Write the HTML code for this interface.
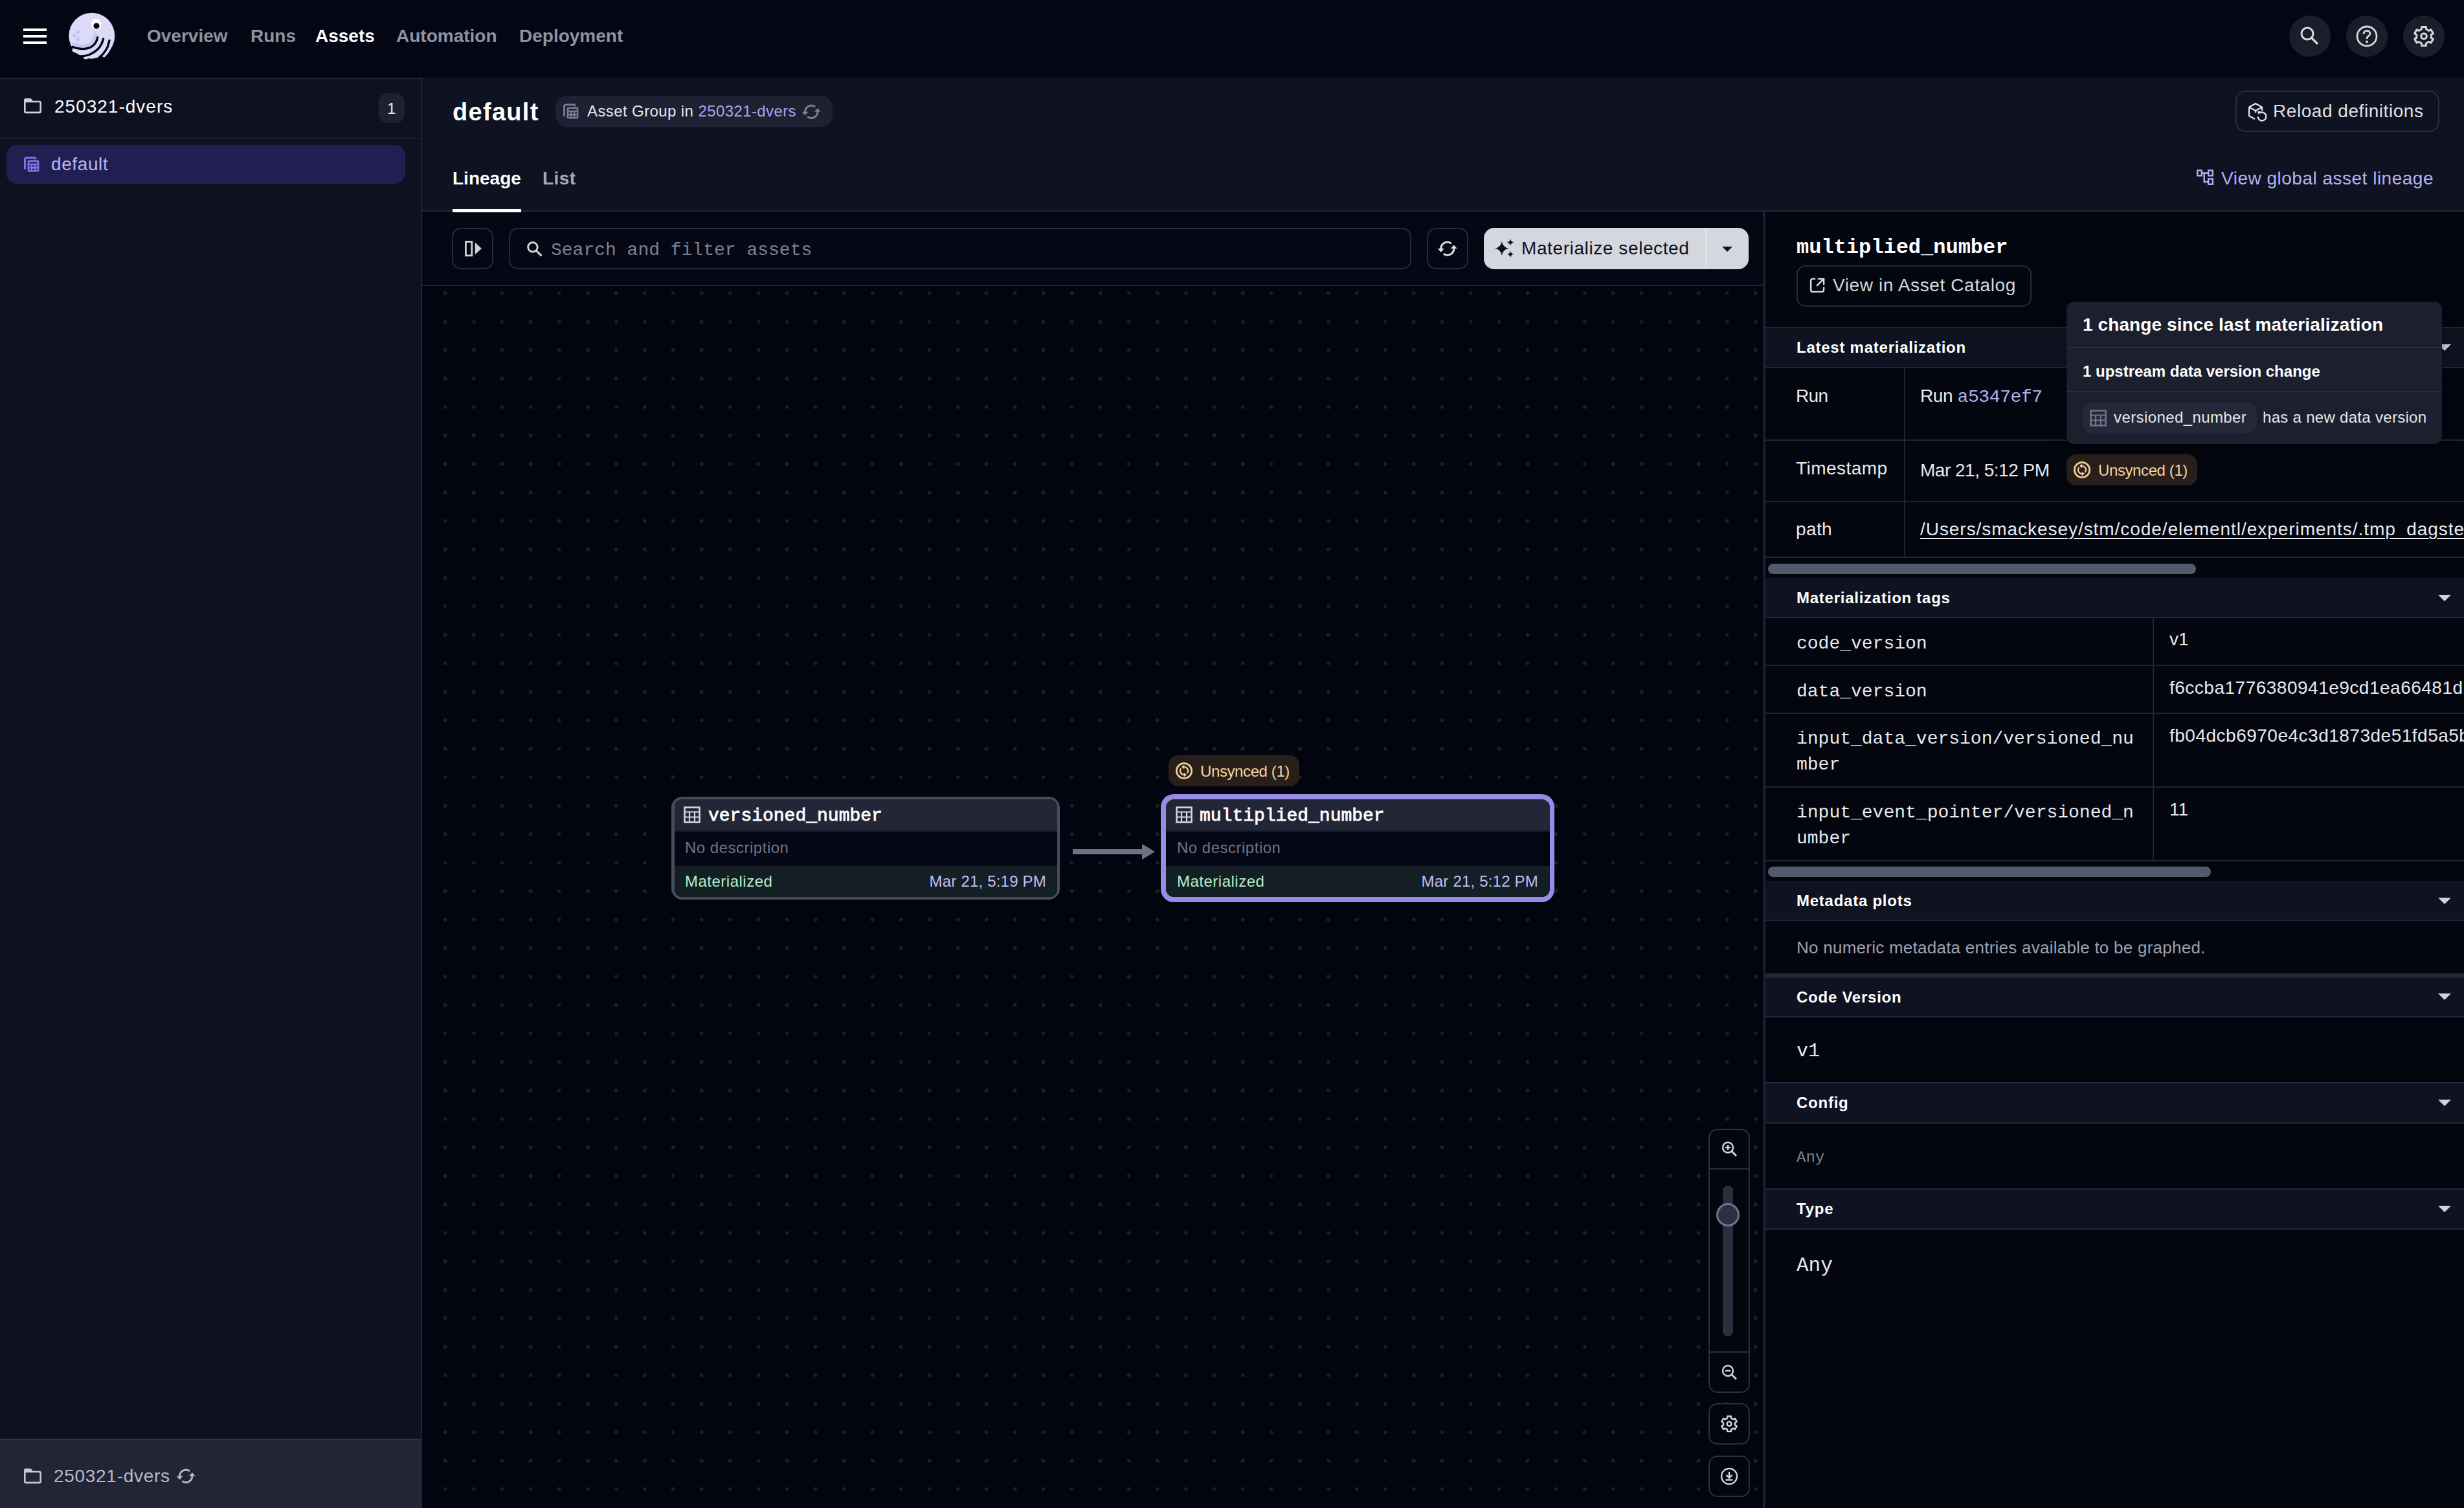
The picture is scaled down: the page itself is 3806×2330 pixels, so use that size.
<!DOCTYPE html>
<html><head><meta charset="utf-8">
<style>
*{box-sizing:border-box;margin:0;padding:0}
html,body{width:3806px;height:2330px;overflow:hidden;background:#03060f;font-family:"Liberation Sans",sans-serif;color:#e6e7ec;position:relative}
.a{position:absolute}
.t{position:absolute;white-space:nowrap;line-height:1}
svg{position:absolute;overflow:visible}
</style></head><body>
<div class="a" style="left:0px;top:0px;width:3806px;height:120px;background:#040614;"></div>
<div class="a" style="left:36px;top:44px;width:36px;height:4px;background:#ffffff;"></div>
<div class="a" style="left:36px;top:54px;width:36px;height:4px;background:#ffffff;"></div>
<div class="a" style="left:36px;top:64px;width:36px;height:4px;background:#ffffff;"></div>
<svg style="left:100px;top:14px;" width="84" height="84" viewBox="0 0 84 84">
<circle cx="41.8" cy="41.3" r="35.5" fill="#dcdaf8"/>
<path d="M14.5 63.5 C22 68 36 68.5 45 63.5 C50 60.5 53 56 55 50" fill="none" stroke="#dcdaf8" stroke-width="6" stroke-linecap="round"/>
<path d="M32 74.5 C42 73 52 68 58 60 C61 56 63 52 64 48" fill="none" stroke="#dcdaf8" stroke-width="6" stroke-linecap="round"/>
<path d="M60.5 71.5 C65 67 69 61 71 54" fill="none" stroke="#dcdaf8" stroke-width="5.5" stroke-linecap="round"/>
<path d="M14 55 C22 59 32 59 40 54 C45 50 47 44 48 40" fill="none" stroke="#c8c4f3" stroke-width="6" stroke-linecap="round"/>
<path d="M12 58.5 C20 62 32 63 40 59 C46 56 49.5 50 50.7 44" fill="none" stroke="#040614" stroke-width="3.4" stroke-linecap="round"/>
<path d="M18 72 C24 73.5 31 73 38 70.5 C44 68 48 65 51 62 C55 58 58 52 59.6 46.2" fill="none" stroke="#040614" stroke-width="3.4" stroke-linecap="round"/><path d="M14 66.5 Q22 74 31 77.5 L14 80 Z" fill="#040614"/><path d="M31 79 Q44 78 58 72 L58 82 L31 82 Z" fill="#040614"/>
<path d="M54 74 C58 71.5 62.5 65.5 66 59 C67.5 54 68.3 51.5 69 48.7" fill="none" stroke="#040614" stroke-width="3.4" stroke-linecap="round"/>
<circle cx="48.5" cy="23.6" r="8" fill="#ffffff"/><circle cx="49" cy="26" r="4.6" fill="#0a0a1a"/>
<circle cx="20.3" cy="35.4" r="2.6" fill="#c4c0f0"/><circle cx="14.8" cy="41" r="2.6" fill="#c4c0f0"/><circle cx="20.3" cy="46.5" r="2.6" fill="#c4c0f0"/>
</svg>
<div class="t" style="left:227px;top:42.2px;font-size:28px;font-family:'Liberation Sans',sans-serif;color:#8e93a3;font-weight:bold;">Overview</div>
<div class="t" style="left:387px;top:42.2px;font-size:28px;font-family:'Liberation Sans',sans-serif;color:#8e93a3;font-weight:bold;">Runs</div>
<div class="t" style="left:487px;top:42.2px;font-size:28px;font-family:'Liberation Sans',sans-serif;color:#ffffff;font-weight:bold;">Assets</div>
<div class="t" style="left:612px;top:42.2px;font-size:28px;font-family:'Liberation Sans',sans-serif;color:#8e93a3;font-weight:bold;">Automation</div>
<div class="t" style="left:802px;top:42.2px;font-size:28px;font-family:'Liberation Sans',sans-serif;color:#8e93a3;font-weight:bold;">Deployment</div>
<div class="a" style="left:3536px;top:24px;width:64px;height:64px;background:#1b1d2a;border-radius:50%;"></div>
<div class="a" style="left:3624px;top:24px;width:64px;height:64px;background:#1b1d2a;border-radius:50%;"></div>
<div class="a" style="left:3712px;top:24px;width:64px;height:64px;background:#1b1d2a;border-radius:50%;"></div>
<svg style="left:3552px;top:40px;" width="32" height="32" viewBox="0 0 32 32"><circle cx="12" cy="12" r="9" fill="none" stroke="#d5d7de" stroke-width="3"/><path d="M19 19 L28 28" stroke="#d5d7de" stroke-width="3.2"/></svg>
<svg style="left:3640px;top:40px;" width="32" height="32" viewBox="0 0 32 32"><circle cx="16" cy="16" r="15" fill="none" stroke="#d5d7de" stroke-width="2.8"/><path d="M11 12.5 C11 9 13.5 7.5 16 7.5 C18.8 7.5 21 9.3 21 12 C21 15 17.5 15.5 16.2 18 L16.2 20" fill="none" stroke="#d5d7de" stroke-width="2.8"/><circle cx="16" cy="24.5" r="1.9" fill="#d5d7de"/></svg>
<svg style="left:3728px;top:40px;" width="32" height="32" viewBox="0 0 32 32"><path d="M12.45 5.06 L12.57 1.40 L19.43 1.40 L19.55 5.06 L23.70 7.45 L26.93 5.73 L30.36 11.66 L27.25 13.61 L27.25 18.39 L30.36 20.34 L26.93 26.27 L23.70 24.55 L19.55 26.94 L19.43 30.60 L12.57 30.60 L12.45 26.94 L8.30 24.55 L5.07 26.27 L1.64 20.34 L4.75 18.39 L4.75 13.61 L1.64 11.66 L5.07 5.73 L8.30 7.45 Z" fill="none" stroke="#d5d7de" stroke-width="3" stroke-linejoin="round"/><circle cx="16" cy="16" r="4.3" fill="none" stroke="#d5d7de" stroke-width="3"/></svg>
<div class="a" style="left:0px;top:120px;width:650px;height:2210px;background:#0e1120;"></div>
<div class="a" style="left:0px;top:120px;width:652px;height:2px;background:#22263a;"></div>
<div class="a" style="left:650px;top:120px;width:2px;height:2210px;background:#1f2333;"></div>
<div class="a" style="left:0px;top:213px;width:650px;height:2px;background:#1d2030;"></div>
<svg style="left:37px;top:152px;" width="27" height="23" viewBox="0 0 27 23"><rect x="1.3" y="5" width="24.4" height="16.9" rx="2" fill="none" stroke="#d0d2da" stroke-width="2.6"/><path d="M0 2.5 Q0 0 2.5 0 L10.5 0 L13.5 3.8 L13.5 5 L0 5 Z" fill="#d0d2da"/></svg>
<div class="t" style="left:84px;top:151.2px;font-size:28px;font-family:'Liberation Sans',sans-serif;color:#ffffff;letter-spacing:1px;">250321-dvers</div>
<div class="a" style="left:585px;top:144px;width:40px;height:46px;background:#1e2131;border-radius:14px;"></div>
<div class="t" style="left:598px;top:155.6px;font-size:24px;font-family:'Liberation Sans',sans-serif;color:#e6e7ec;">1</div>
<div class="a" style="left:10px;top:224px;width:616px;height:60px;background:#211f52;border-radius:16px;"></div>
<svg style="left:37px;top:242px;" width="25" height="25" viewBox="0 0 25 25"><path d="M1.5 18.6 L1.5 4.7 Q1.5 1.7 4.5 1.7 L16.4 1.7 Q17.9 1.7 17.9 3.5" fill="none" stroke="#7c76e2" stroke-width="2.9" stroke-linecap="round"/><rect x="5.1" y="4.9" width="18.8" height="19" rx="3.2" fill="#7c76e2" stroke="#211f52" stroke-width="0.8"/><g fill="#211f52"><rect x="8.2" y="8.3" width="12.6" height="2.3"/><rect x="8.2" y="13.2" width="2.6" height="2.4"/><rect x="13.2" y="13.2" width="2.8" height="2.4"/><rect x="18.4" y="13.2" width="2.6" height="2.4"/><rect x="8.2" y="18.6" width="2.6" height="2.4"/><rect x="13.2" y="18.6" width="2.8" height="2.4"/><rect x="18.4" y="18.6" width="2.6" height="2.4"/></g></svg>
<div class="t" style="left:79px;top:240.2px;font-size:28px;font-family:'Liberation Sans',sans-serif;color:#b9b5f3;letter-spacing:0.6px;">default</div>
<div class="a" style="left:0px;top:2223px;width:650px;height:107px;background:#222536;"></div>
<div class="a" style="left:0px;top:2223px;width:650px;height:2px;background:#30344a;"></div>
<svg style="left:37px;top:2269px;" width="27" height="23" viewBox="0 0 27 23"><rect x="1.3" y="5" width="24.4" height="16.9" rx="2" fill="none" stroke="#c6c8d0" stroke-width="2.6"/><path d="M0 2.5 Q0 0 2.5 0 L10.5 0 L13.5 3.8 L13.5 5 L0 5 Z" fill="#c6c8d0"/></svg>
<div class="t" style="left:83px;top:2267.2px;font-size:28px;font-family:'Liberation Sans',sans-serif;color:#b8bac4;letter-spacing:0.7px;">250321-dvers</div>
<svg style="left:273px;top:2270px;" width="29" height="21" viewBox="0 0 29 21"><g transform="scale(0.9666666666666667)"><path d="M19.7 2.44 A10 10 0 0 0 4.7 11.5" fill="none" stroke="#b8bac4" stroke-width="3" stroke-linecap="round"/><path d="M-0.3 11.1 L9.7 11.1 L4.7 16.8 Z" fill="#b8bac4"/><path d="M9.7 19.76 A10 10 0 0 0 24.7 10.7" fill="none" stroke="#b8bac4" stroke-width="3" stroke-linecap="round"/><path d="M19.7 11.1 L29.7 11.1 L24.7 5.4 Z" fill="#b8bac4"/></g></svg>
<div class="a" style="left:652px;top:120px;width:3154px;height:207px;background:#0f1220;"></div>
<div class="a" style="left:652px;top:325px;width:3154px;height:2px;background:#22263a;"></div>
<div class="t" style="left:699px;top:153.7px;font-size:38px;font-family:'Liberation Sans',sans-serif;color:#ffffff;font-weight:bold;letter-spacing:1.3px;">default</div>
<div class="a" style="left:858px;top:148px;width:428px;height:48px;background:#1e2131;border-radius:18px;"></div>
<svg style="left:870px;top:160px;" width="25" height="25" viewBox="0 0 25 25"><path d="M1.5 18.6 L1.5 4.7 Q1.5 1.7 4.5 1.7 L16.4 1.7 Q17.9 1.7 17.9 3.5" fill="none" stroke="#737b90" stroke-width="2.9" stroke-linecap="round"/><rect x="5.1" y="4.9" width="18.8" height="19" rx="3.2" fill="#737b90" stroke="#1e2131" stroke-width="0.8"/><g fill="#1e2131"><rect x="8.2" y="8.3" width="12.6" height="2.3"/><rect x="8.2" y="13.2" width="2.6" height="2.4"/><rect x="13.2" y="13.2" width="2.8" height="2.4"/><rect x="18.4" y="13.2" width="2.6" height="2.4"/><rect x="8.2" y="18.6" width="2.6" height="2.4"/><rect x="13.2" y="18.6" width="2.8" height="2.4"/><rect x="18.4" y="18.6" width="2.6" height="2.4"/></g></svg>
<div class="t" style="left:907px;top:159.6px;font-size:24px;font-family:'Liberation Sans',sans-serif;color:#e6e7ec;letter-spacing:0.4px;">Asset Group in <span style="color:#a9a5f0">250321-dvers</span></div>
<svg style="left:1239px;top:162px;" width="29" height="21" viewBox="0 0 29 21"><g transform="scale(0.9666666666666667)"><path d="M19.7 2.44 A10 10 0 0 0 4.7 11.5" fill="none" stroke="#7d8293" stroke-width="3" stroke-linecap="round"/><path d="M-0.3 11.1 L9.7 11.1 L4.7 16.8 Z" fill="#7d8293"/><path d="M9.7 19.76 A10 10 0 0 0 24.7 10.7" fill="none" stroke="#7d8293" stroke-width="3" stroke-linecap="round"/><path d="M19.7 11.1 L29.7 11.1 L24.7 5.4 Z" fill="#7d8293"/></g></svg>
<div class="a" style="left:3453px;top:140px;width:315px;height:64px;border:2px solid #2a2e3e;border-radius:16px;"></div>
<svg style="left:3472px;top:158px;" width="28" height="30" viewBox="0 0 28 30"><path d="M2 7.5 L12 2 L22 7.5 L22 13" fill="none" stroke="#e0e1e6" stroke-width="2.4" stroke-linejoin="round"/><path d="M2 7.5 L2 21 L11 26" fill="none" stroke="#e0e1e6" stroke-width="2.4" stroke-linejoin="round"/><path d="M2 7.5 L12 13 L22 7.5" fill="none" stroke="#e0e1e6" stroke-width="2.4" stroke-linejoin="round"/><path d="M12 13 L12 16" stroke="#e0e1e6" stroke-width="2.4"/><path d="M15.5 22 A6.5 6.5 0 1 0 18.5 16.5" fill="none" stroke="#e0e1e6" stroke-width="2.4"/><path d="M14.5 14 L20 14 L17 19 Z" fill="#e0e1e6"/></svg>
<div class="t" style="left:3511px;top:158.2px;font-size:28px;font-family:'Liberation Sans',sans-serif;color:#e0e1e6;letter-spacing:0.55px;">Reload definitions</div>
<div class="t" style="left:699px;top:262.2px;font-size:28px;font-family:'Liberation Sans',sans-serif;color:#ffffff;font-weight:bold;">Lineage</div>
<div class="t" style="left:838px;top:262.2px;font-size:28px;font-family:'Liberation Sans',sans-serif;color:#a8abb8;font-weight:bold;letter-spacing:0.4px;">List</div>
<svg style="left:3393px;top:262px;" width="27" height="25" viewBox="0 0 27 25"><g fill="none" stroke="#b4b0f0" stroke-width="2.4"><rect x="1.2" y="1.2" width="6.6" height="8.2"/><rect x="18.2" y="1.2" width="6.6" height="8.2"/><rect x="18.2" y="14.4" width="6.6" height="8.3"/><path d="M8 5.5 L18 5.5 M11.7 5.5 L11.7 19 L18 19"/></g></svg>
<div class="t" style="left:3431px;top:262.2px;font-size:28px;font-family:'Liberation Sans',sans-serif;color:#b4b0f0;letter-spacing:0.5px;">View global asset lineage</div>
<div class="a" style="left:652px;top:327px;width:2072px;height:114px;background:#050814;"></div>
<div class="a" style="left:652px;top:440px;width:2072px;height:3px;background:#22273a;"></div>
<div class="a" style="left:699px;top:323px;width:106px;height:5px;background:#ffffff;"></div>
<div class="a" style="left:698px;top:352px;width:64px;height:64px;border:2px solid #262a3a;border-radius:14px;"></div>
<svg style="left:718px;top:372px;" width="27" height="26" viewBox="0 0 27 26"><rect x="1.4" y="1.4" width="9.4" height="21.4" fill="none" stroke="#d0d2da" stroke-width="2.8"/><path d="M15.8 2.8 L26 12 L15.8 21.3 Z" fill="#d0d2da"/></svg>
<div class="a" style="left:786px;top:352px;width:1394px;height:64px;border:2px solid #262a3a;border-radius:14px;"></div>
<svg style="left:814px;top:373px;" width="25" height="25" viewBox="0 0 25 25"><circle cx="8.9" cy="8.8" r="7.3" fill="none" stroke="#d5d7de" stroke-width="2.8"/><path d="M14.3 14.2 L22.5 22.4" stroke="#d5d7de" stroke-width="3"/></svg>
<div class="t" style="left:851px;top:372.7px;font-size:28px;font-family:'Liberation Mono',monospace;color:#7d8293;">Search and filter assets</div>
<div class="a" style="left:2204px;top:352px;width:64px;height:64px;border:2px solid #262a3a;border-radius:14px;"></div>
<svg style="left:2221px;top:373px;" width="30" height="22" viewBox="0 0 30 22"><g transform="scale(1.0)"><path d="M19.7 2.44 A10 10 0 0 0 4.7 11.5" fill="none" stroke="#dfe0e6" stroke-width="3" stroke-linecap="round"/><path d="M-0.3 11.1 L9.7 11.1 L4.7 16.8 Z" fill="#dfe0e6"/><path d="M9.7 19.76 A10 10 0 0 0 24.7 10.7" fill="none" stroke="#dfe0e6" stroke-width="3" stroke-linecap="round"/><path d="M19.7 11.1 L29.7 11.1 L24.7 5.4 Z" fill="#dfe0e6"/></g></svg>
<div class="a" style="left:2292px;top:352px;width:409px;height:64px;background:#d5d7de;border-radius:16px;"></div>
<div class="a" style="left:2634px;top:352px;width:2px;height:64px;background:#e2e3e8;"></div>
<svg style="left:2309px;top:370px;" width="30" height="30" viewBox="0 0 30 30"><path d="M10.80 3.00 Q12.31 12.29 21.60 13.80 Q12.31 15.31 10.80 24.60 Q9.29 15.31 0.00 13.80 Q9.29 12.29 10.80 3.00 Z" fill="#0e1120"/><path d="M24.05 -1.00 Q24.81 3.64 29.45 4.40 Q24.81 5.16 24.05 9.80 Q23.29 5.16 18.65 4.40 Q23.29 3.64 24.05 -1.00 Z" fill="#0e1120"/><path d="M24.05 17.45 Q24.81 22.09 29.45 22.85 Q24.81 23.61 24.05 28.25 Q23.29 23.61 18.65 22.85 Q23.29 22.09 24.05 17.45 Z" fill="#0e1120"/></svg>
<div class="t" style="left:2350px;top:370.2px;font-size:28px;font-family:'Liberation Sans',sans-serif;color:#0e1120;letter-spacing:0.6px;">Materialize selected</div>
<svg style="left:2660px;top:381px;" width="18" height="10" viewBox="0 0 18 10"><path d="M0 0 L16 0 L8 8 Z" fill="#0e1120"/></svg>
<div class="a" style="left:652px;top:442px;width:2072px;height:1888px;background:#02050f;background-image:radial-gradient(circle at 22px 22px,#1b1d2c 0,#1b1d2c 2.6px,transparent 3.2px);background-size:44px 44px;background-position:13.7px -11.1px;"></div>
<div class="a" style="left:1037px;top:1231px;width:600px;height:159px;background:#464b5e;border-radius:17px;"></div>
<div class="a" style="left:1042px;top:1235px;width:591px;height:151px;background:#050814;border-radius:12px;overflow:hidden;"></div>
<div class="a" style="left:1042px;top:1235px;width:591px;height:50px;background:#232637;border-radius:12px 12px 0 0;"></div>
<div class="a" style="left:1042px;top:1338px;width:591px;height:48px;background:#131f24;border-radius:0 0 13px 13px;"></div>
<div class="a" style="left:1042px;top:1283px;width:591px;height:2px;background:#181b29;"></div>
<svg style="left:1056px;top:1246px;" width="26" height="26" viewBox="0 0 26 26"><rect x="1.5" y="1.5" width="23" height="23" fill="none" stroke="#d5d7de" stroke-width="2.6"/><path d="M1.5 8.5 L24.5 8.5 M1.5 16.5 L24.5 16.5 M9 8.5 L9 24.5 M17 8.5 L17 24.5" stroke="#d5d7de" stroke-width="2.2"/></svg>
<div class="t" style="left:1094px;top:1247.2px;font-size:28px;font-family:'Liberation Mono',monospace;color:#ffffff;-webkit-text-stroke:0.8px #ffffff;">versioned_number</div>
<div class="t" style="left:1058px;top:1297.6px;font-size:24px;font-family:'Liberation Sans',sans-serif;color:#6f7486;letter-spacing:0.5px;">No description</div>
<div class="t" style="left:1058px;top:1349.6px;font-size:24px;font-family:'Liberation Sans',sans-serif;color:#b5edc6;letter-spacing:0.5px;">Materialized</div>
<div class="t" style="right:2190px;top:1349.6px;font-size:24px;font-family:'Liberation Sans',sans-serif;color:#c2bef5;letter-spacing:0.2px;">Mar 21, 5:19 PM</div>
<div class="a" style="left:1793px;top:1227px;width:608px;height:167px;background:#978ce4;border-radius:20px;"></div>
<div class="a" style="left:1801px;top:1235px;width:593px;height:151px;background:#050814;border-radius:13px;"></div>
<div class="a" style="left:1801px;top:1235px;width:593px;height:50px;background:#232637;border-radius:13px 13px 0 0;"></div>
<div class="a" style="left:1801px;top:1338px;width:593px;height:48px;background:#131f24;border-radius:0 0 13px 13px;"></div>
<div class="a" style="left:1801px;top:1283px;width:593px;height:2px;background:#181b29;"></div>
<svg style="left:1816px;top:1246px;" width="26" height="26" viewBox="0 0 26 26"><rect x="1.5" y="1.5" width="23" height="23" fill="none" stroke="#d5d7de" stroke-width="2.6"/><path d="M1.5 8.5 L24.5 8.5 M1.5 16.5 L24.5 16.5 M9 8.5 L9 24.5 M17 8.5 L17 24.5" stroke="#d5d7de" stroke-width="2.2"/></svg>
<div class="t" style="left:1853px;top:1247.2px;font-size:28px;font-family:'Liberation Mono',monospace;color:#ffffff;-webkit-text-stroke:0.8px #ffffff;">multiplied_number</div>
<div class="t" style="left:1818px;top:1297.6px;font-size:24px;font-family:'Liberation Sans',sans-serif;color:#6f7486;letter-spacing:0.5px;">No description</div>
<div class="t" style="left:1818px;top:1349.6px;font-size:24px;font-family:'Liberation Sans',sans-serif;color:#b5edc6;letter-spacing:0.5px;">Materialized</div>
<div class="t" style="right:1430px;top:1349.6px;font-size:24px;font-family:'Liberation Sans',sans-serif;color:#c2bef5;letter-spacing:0.2px;">Mar 21, 5:12 PM</div>
<div class="a" style="left:1657px;top:1312px;width:110px;height:8px;background:#6b7385;"></div>
<svg style="left:1764px;top:1304px;" width="20" height="24" viewBox="0 0 20 24"><path d="M0 0 L20 12 L0 24 Z" fill="#6b7385"/></svg>
<div class="a" style="left:1805px;top:1167px;width:202px;height:48px;background:#291f1a;border-radius:15px;"></div>
<svg style="left:1815px;top:1177px;" width="28" height="28" viewBox="0 0 28 28"><circle cx="14" cy="14" r="11.7" fill="none" stroke="#f0cf98" stroke-width="2.7"/><g transform="translate(14 14) rotate(90) scale(0.6) translate(-14.7 -11.1)"><path d="M19.7 2.44 A10 10 0 0 0 4.7 11.5" fill="none" stroke="#f0cf98" stroke-width="3.6" stroke-linecap="round"/><path d="M-1.3 10.6 L10.7 10.6 L4.7 17.8 Z" fill="#f0cf98"/><path d="M9.7 19.76 A10 10 0 0 0 24.7 10.7" fill="none" stroke="#f0cf98" stroke-width="3.6" stroke-linecap="round"/><path d="M18.7 11.6 L30.7 11.6 L24.7 4.4 Z" fill="#f0cf98"/></g></svg>
<div class="t" style="left:1854px;top:1179.6px;font-size:24px;font-family:'Liberation Sans',sans-serif;color:#f2d3a0;letter-spacing:-0.4px;">Unsynced (1)</div>
<div class="a" style="left:2639px;top:1744px;width:64px;height:408px;background:#03060f;border:2px solid #2a2e3e;border-radius:14px;"></div>
<div class="a" style="left:2641px;top:1805px;width:60px;height:2px;background:#2a2e3e;"></div>
<div class="a" style="left:2641px;top:2088px;width:60px;height:2px;background:#2a2e3e;"></div>
<svg style="left:2659px;top:1763px;" width="24" height="24" viewBox="0 0 24 24"><circle cx="10" cy="10" r="8" fill="none" stroke="#d5d7de" stroke-width="2.4"/><path d="M16 16 L23 23" stroke="#d5d7de" stroke-width="2.8"/><path d="M6 10 L14 10" stroke="#d5d7de" stroke-width="2.4"/><path d="M10 6 L10 14" stroke="#d5d7de" stroke-width="2.4"/></svg>
<svg style="left:2659px;top:2108px;" width="24" height="24" viewBox="0 0 24 24"><circle cx="10" cy="10" r="8" fill="none" stroke="#d5d7de" stroke-width="2.4"/><path d="M16 16 L23 23" stroke="#d5d7de" stroke-width="2.8"/><path d="M6 10 L14 10" stroke="#d5d7de" stroke-width="2.4"/></svg>
<div class="a" style="left:2661px;top:1832px;width:16px;height:233px;background:#2a2e3e;border-radius:8px;"></div>
<div class="a" style="left:2651px;top:1859px;width:36px;height:36px;background:#2c3040;border:3px solid #6f7689;border-radius:50%;"></div>
<div class="a" style="left:2639px;top:2168px;width:64px;height:64px;background:#03060f;border:2px solid #2a2e3e;border-radius:14px;"></div>
<svg style="left:2658px;top:2187px;" width="26" height="26" viewBox="0 0 26 26"><path d="M10.16 4.25 L10.21 1.12 L15.79 1.12 L15.84 4.25 L19.16 6.16 L21.89 4.65 L24.68 9.47 L22.00 11.09 L22.00 14.91 L24.68 16.53 L21.89 21.35 L19.16 19.84 L15.84 21.75 L15.79 24.88 L10.21 24.88 L10.16 21.75 L6.84 19.84 L4.11 21.35 L1.32 16.53 L4.00 14.91 L4.00 11.09 L1.32 9.47 L4.11 4.65 L6.84 6.16 Z" fill="none" stroke="#d5d7de" stroke-width="2.4" stroke-linejoin="round"/><circle cx="13" cy="13" r="3.4" fill="none" stroke="#d5d7de" stroke-width="2.4"/></svg>
<div class="a" style="left:2639px;top:2249px;width:64px;height:64px;background:#03060f;border:2px solid #2a2e3e;border-radius:14px;"></div>
<svg style="left:2657px;top:2267px;" width="28" height="28" viewBox="0 0 28 28"><circle cx="14" cy="14" r="12" fill="none" stroke="#d5d7de" stroke-width="2.4"/><path d="M14 7 L14 15" stroke="#d5d7de" stroke-width="2.4"/><path d="M9.5 12 L14 16.5 L18.5 12" fill="none" stroke="#d5d7de" stroke-width="2.4"/><path d="M8.5 19.5 L19.5 19.5" stroke="#d5d7de" stroke-width="2.4"/></svg>
<div class="a" style="left:2727px;top:327px;width:1079px;height:2003px;background:#03060f;"></div>
<div class="a" style="left:2723px;top:327px;width:4px;height:2003px;background:#1b1e2c;"></div>
<div class="t" style="left:2775px;top:366.7px;font-size:32px;font-family:'Liberation Mono',monospace;color:#ffffff;font-weight:bold;">multiplied_number</div>
<div class="a" style="left:2775px;top:410px;width:363px;height:64px;border:2px solid #262a3a;border-radius:14px;"></div>
<svg style="left:2795px;top:430px;" width="24" height="24" viewBox="0 0 24 24"><path d="M9.1 0.9 L5 0.9 Q2.1 0.9 2.1 3.8 L2.1 18 Q2.1 20.9 5 20.9 L19.2 20.9 Q22.1 20.9 22.1 18 L22.1 13.6" fill="none" stroke="#dfe0e6" stroke-width="2.4"/><path d="M13.9 0.9 L22.1 0.9 L22.1 9.1 M11.8 11.2 L21.6 1.3" fill="none" stroke="#dfe0e6" stroke-width="2.4" stroke-linecap="round"/></svg>
<div class="t" style="left:2831px;top:427.2px;font-size:28px;font-family:'Liberation Sans',sans-serif;color:#d5d7de;letter-spacing:0.6px;">View in Asset Catalog</div>
<div class="a" style="left:2727px;top:505px;width:1079px;height:63px;background:#0f1220;"></div>
<div class="a" style="left:2727px;top:505px;width:1079px;height:2px;background:#22263a;"></div>
<div class="a" style="left:2727px;top:567px;width:1079px;height:2px;background:#22263a;"></div>
<div class="t" style="left:2775px;top:525.1px;font-size:24px;font-family:'Liberation Sans',sans-serif;color:#ffffff;font-weight:bold;letter-spacing:0.75px;">Latest materialization</div>
<svg style="left:3766px;top:531.5px;" width="20" height="10" viewBox="0 0 20 10"><path d="M0 0 L20 0 L10 10 Z" fill="#d0d2da"/></svg>
<div class="a" style="left:2727px;top:679px;width:1079px;height:2px;background:#1f2333;"></div>
<div class="a" style="left:2727px;top:774px;width:1079px;height:2px;background:#1f2333;"></div>
<div class="a" style="left:2727px;top:860px;width:1079px;height:2px;background:#1f2333;"></div>
<div class="a" style="left:2941px;top:568px;width:2px;height:293px;background:#1f2333;"></div>
<div class="t" style="left:2774px;top:598.2px;font-size:28px;font-family:'Liberation Sans',sans-serif;color:#e8e9ee;letter-spacing:-0.7px;">Run</div>
<div class="t" style="left:2966px;top:598.2px;font-size:28px;font-family:'Liberation Sans',sans-serif;color:#e8e9ee;letter-spacing:-0.4px;">Run&nbsp;<span style="font-family:'Liberation Mono',monospace;color:#b3aff2">a5347ef7</span></div>
<div class="t" style="left:2774px;top:710.2px;font-size:28px;font-family:'Liberation Sans',sans-serif;color:#e8e9ee;letter-spacing:0.45px;">Timestamp</div>
<div class="t" style="left:2966px;top:713.2px;font-size:28px;font-family:'Liberation Sans',sans-serif;color:#e8e9ee;letter-spacing:-0.5px;">Mar 21, 5:12 PM</div>
<div class="a" style="left:3192px;top:702px;width:202px;height:48px;background:#291f1a;border-radius:15px;"></div>
<svg style="left:3202px;top:712px;" width="28" height="28" viewBox="0 0 28 28"><circle cx="14" cy="14" r="11.7" fill="none" stroke="#f0cf98" stroke-width="2.7"/><g transform="translate(14 14) rotate(90) scale(0.6) translate(-14.7 -11.1)"><path d="M19.7 2.44 A10 10 0 0 0 4.7 11.5" fill="none" stroke="#f0cf98" stroke-width="3.6" stroke-linecap="round"/><path d="M-1.3 10.6 L10.7 10.6 L4.7 17.8 Z" fill="#f0cf98"/><path d="M9.7 19.76 A10 10 0 0 0 24.7 10.7" fill="none" stroke="#f0cf98" stroke-width="3.6" stroke-linecap="round"/><path d="M18.7 11.6 L30.7 11.6 L24.7 4.4 Z" fill="#f0cf98"/></g></svg>
<div class="t" style="left:3241px;top:714.6px;font-size:24px;font-family:'Liberation Sans',sans-serif;color:#f2d3a0;letter-spacing:-0.4px;">Unsynced (1)</div>
<div class="t" style="left:2774px;top:804.2px;font-size:28px;font-family:'Liberation Sans',sans-serif;color:#e8e9ee;letter-spacing:0.4px;">path</div>
<div class="t" style="left:2966px;top:804.2px;font-size:28px;font-family:'Liberation Sans',sans-serif;color:#e8e9ee;text-decoration:underline;text-underline-offset:4px;text-decoration-thickness:2px;letter-spacing:0.95px;">/Users/smackesey/stm/code/elementl/experiments/.tmp_dagster_home_abcdef/storage/multiplied_number</div>
<div class="a" style="left:2731px;top:871px;width:661px;height:16px;background:#525a6e;border-radius:8px;"></div>
<div class="a" style="left:2727px;top:893px;width:1079px;height:61px;background:#0f1220;"></div>
<div class="a" style="left:2727px;top:953px;width:1079px;height:2px;background:#22263a;"></div>
<div class="t" style="left:2775px;top:912.1px;font-size:24px;font-family:'Liberation Sans',sans-serif;color:#ffffff;font-weight:bold;letter-spacing:0.75px;">Materialization tags</div>
<svg style="left:3766px;top:918.5px;" width="20" height="10" viewBox="0 0 20 10"><path d="M0 0 L20 0 L10 10 Z" fill="#d0d2da"/></svg>
<div class="a" style="left:2727px;top:1027px;width:1079px;height:2px;background:#1f2333;"></div>
<div class="a" style="left:2727px;top:1101px;width:1079px;height:2px;background:#1f2333;"></div>
<div class="a" style="left:2727px;top:1215px;width:1079px;height:2px;background:#1f2333;"></div>
<div class="a" style="left:2727px;top:1329px;width:1079px;height:2px;background:#1f2333;"></div>
<div class="a" style="left:3325px;top:954px;width:2px;height:376px;background:#1f2333;"></div>
<div class="t" style="left:2775px;top:980.7px;font-size:28px;font-family:'Liberation Mono',monospace;color:#e8e9ee;">code_version</div>
<div class="t" style="left:2775px;top:1054.7px;font-size:28px;font-family:'Liberation Mono',monospace;color:#e8e9ee;">data_version</div>
<div class="t" style="left:2775px;top:1127.7px;font-size:28px;font-family:'Liberation Mono',monospace;color:#e8e9ee;">input_data_version/versioned_nu</div>
<div class="t" style="left:2775px;top:1167.7px;font-size:28px;font-family:'Liberation Mono',monospace;color:#e8e9ee;">mber</div>
<div class="t" style="left:2775px;top:1241.7px;font-size:28px;font-family:'Liberation Mono',monospace;color:#e8e9ee;">input_event_pointer/versioned_n</div>
<div class="t" style="left:2775px;top:1281.7px;font-size:28px;font-family:'Liberation Mono',monospace;color:#e8e9ee;">umber</div>
<div class="t" style="left:3351px;top:974.2px;font-size:28px;font-family:'Liberation Sans',sans-serif;color:#e8e9ee;">v1</div>
<div class="t" style="left:3351px;top:1049.2px;font-size:28px;font-family:'Liberation Sans',sans-serif;color:#e8e9ee;letter-spacing:0.5px;">f6ccba1776380941e9cd1ea66481d2a5f0c</div>
<div class="t" style="left:3351px;top:1123.2px;font-size:28px;font-family:'Liberation Sans',sans-serif;color:#e8e9ee;letter-spacing:0.5px;">fb04dcb6970e4c3d1873de51fd5a5b1e2c9</div>
<div class="t" style="left:3351px;top:1237.2px;font-size:28px;font-family:'Liberation Sans',sans-serif;color:#e8e9ee;">11</div>
<div class="a" style="left:2731px;top:1339px;width:684px;height:16px;background:#525a6e;border-radius:8px;"></div>
<div class="a" style="left:2727px;top:1361px;width:1079px;height:61px;background:#0f1220;"></div>
<div class="a" style="left:2727px;top:1421px;width:1079px;height:2px;background:#22263a;"></div>
<div class="t" style="left:2775px;top:1380.1px;font-size:24px;font-family:'Liberation Sans',sans-serif;color:#ffffff;font-weight:bold;letter-spacing:0.75px;">Metadata plots</div>
<svg style="left:3766px;top:1386.5px;" width="20" height="10" viewBox="0 0 20 10"><path d="M0 0 L20 0 L10 10 Z" fill="#d0d2da"/></svg>
<div class="t" style="left:2775px;top:1450.9px;font-size:26px;font-family:'Liberation Sans',sans-serif;color:#9ea1ad;letter-spacing:0.25px;">No numeric metadata entries available to be graphed.</div>
<div class="a" style="left:2727px;top:1504px;width:1079px;height:5px;background:#22263a;"></div>
<div class="a" style="left:2727px;top:1509px;width:1079px;height:62px;background:#0f1220;"></div>
<div class="a" style="left:2727px;top:1509px;width:1079px;height:2px;background:#22263a;"></div>
<div class="a" style="left:2727px;top:1570px;width:1079px;height:2px;background:#22263a;"></div>
<div class="t" style="left:2775px;top:1528.6px;font-size:24px;font-family:'Liberation Sans',sans-serif;color:#ffffff;font-weight:bold;letter-spacing:0.75px;">Code Version</div>
<svg style="left:3766px;top:1535.0px;" width="20" height="10" viewBox="0 0 20 10"><path d="M0 0 L20 0 L10 10 Z" fill="#d0d2da"/></svg>
<div class="t" style="left:2775px;top:1609.2px;font-size:30px;font-family:'Liberation Mono',monospace;color:#e8e9ee;">v1</div>
<div class="a" style="left:2727px;top:1672px;width:1079px;height:63px;background:#0f1220;"></div>
<div class="a" style="left:2727px;top:1672px;width:1079px;height:2px;background:#22263a;"></div>
<div class="a" style="left:2727px;top:1734px;width:1079px;height:2px;background:#22263a;"></div>
<div class="t" style="left:2775px;top:1692.1px;font-size:24px;font-family:'Liberation Sans',sans-serif;color:#ffffff;font-weight:bold;letter-spacing:0.75px;">Config</div>
<svg style="left:3766px;top:1698.5px;" width="20" height="10" viewBox="0 0 20 10"><path d="M0 0 L20 0 L10 10 Z" fill="#d0d2da"/></svg>
<div class="t" style="left:2775px;top:1776.8px;font-size:24px;font-family:'Liberation Mono',monospace;color:#7d8293;">Any</div>
<div class="a" style="left:2727px;top:1836px;width:1079px;height:63px;background:#0f1220;"></div>
<div class="a" style="left:2727px;top:1836px;width:1079px;height:2px;background:#22263a;"></div>
<div class="a" style="left:2727px;top:1898px;width:1079px;height:2px;background:#22263a;"></div>
<div class="t" style="left:2775px;top:1856.1px;font-size:24px;font-family:'Liberation Sans',sans-serif;color:#ffffff;font-weight:bold;letter-spacing:0.75px;">Type</div>
<svg style="left:3766px;top:1862.5px;" width="20" height="10" viewBox="0 0 20 10"><path d="M0 0 L20 0 L10 10 Z" fill="#d0d2da"/></svg>
<div class="t" style="left:2775px;top:1940.4px;font-size:31px;font-family:'Liberation Mono',monospace;color:#e8e9ee;">Any</div>
<div class="a" style="left:3192px;top:466px;width:580px;height:220px;background:#1c1f2d;border-radius:12px;box-shadow:0 4px 16px rgba(0,0,0,0.4);"></div>
<div class="a" style="left:3192px;top:536px;width:580px;height:2px;background:#2a2e3e;"></div>
<div class="a" style="left:3192px;top:604px;width:580px;height:2px;background:#2a2e3e;"></div>
<div class="t" style="left:3217px;top:488.2px;font-size:28px;font-family:'Liberation Sans',sans-serif;color:#ffffff;font-weight:bold;letter-spacing:0.1px;">1 change since last materialization</div>
<div class="t" style="left:3217px;top:561.6px;font-size:24px;font-family:'Liberation Sans',sans-serif;color:#ffffff;font-weight:bold;letter-spacing:0px;">1 upstream data version change</div>
<div class="a" style="left:3216px;top:622px;width:270px;height:48px;background:#242839;border-radius:16px;"></div>
<svg style="left:3228px;top:633px;" width="26" height="26" viewBox="0 0 26 26"><rect x="1.5" y="1.5" width="23" height="23" fill="none" stroke="#6f7689" stroke-width="2.6"/><path d="M1.5 8.5 L24.5 8.5 M1.5 16.5 L24.5 16.5 M9 8.5 L9 24.5 M17 8.5 L17 24.5" stroke="#6f7689" stroke-width="2.2"/></svg>
<div class="t" style="left:3265px;top:632.6px;font-size:24px;font-family:'Liberation Sans',sans-serif;color:#e6e7ec;letter-spacing:0.4px;">versioned_number</div>
<div class="t" style="left:3495px;top:632.6px;font-size:24px;font-family:'Liberation Sans',sans-serif;color:#e6e7ec;letter-spacing:0.3px;">has a new data version</div>
</body></html>
